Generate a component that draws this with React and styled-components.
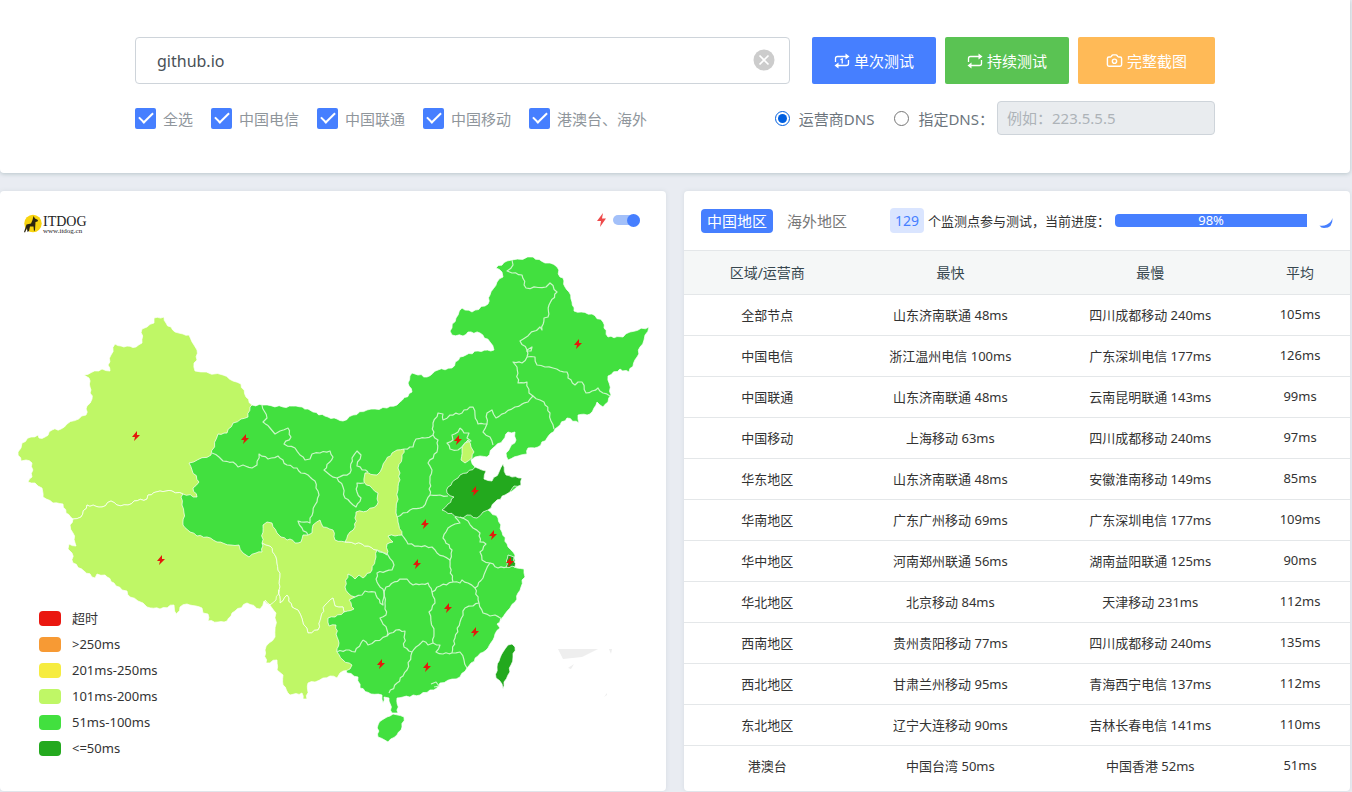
import React, { useState } from 'react';
import styled, { createGlobalStyle } from 'styled-components';
import { Camera } from 'lucide-react';

const GlobalStyle = createGlobalStyle`
    * {
        box-sizing: border-box;
    }

    body {
        margin: 0;
        background: #e9ecf2;
        color: #333;
        font-family: 'Noto Sans', 'Noto Sans CJK SC', sans-serif;
        font-size: 13px;
    }

    button, input {
        font-family: inherit;
    }
`;

const Page = styled.div`
    display: grid;
    gap: 18px;
    padding: 0 2px 1px 0;
`;

const SearchCard = styled.header`
    padding: 37px 24px 38px;
    background: #fff;
    border-radius: 0 0 4px 4px;
    box-shadow: 0 1px 4px #b8c6ca;
`;

const SearchInner = styled.form`
    display: grid;
    gap: 17px;
    max-width: 1080px;
    margin: 0 auto;
`;

const Row = styled.div`
    display: flex;
    align-items: center;
    justify-content: space-between;
    gap: ${({ $gap }) => $gap}px;
`;

const HostField = styled.div`
    display: flex;
    flex: 1;
    align-items: center;
    height: 47px;
    margin-right: 13px;
    padding: 0 14px 2px 21px;
    border: 1px solid #ced4da;
    border-radius: 4px;
`;

const HostInput = styled.input`
    flex: 1;
    min-width: 0;
    padding: 2px 0 0;
    border: 0;
    outline: none;
    color: #495057;
    font-size: 16px;
`;

const ClearButton = styled.button`
    display: flex;
    padding: 0;
    border: 0;
    background: none;
    cursor: pointer;
`;

const ActionButton = styled.button`
    display: flex;
    align-items: center;
    justify-content: center;
    gap: 4px;
    height: 47px;
    padding: 0 ${({ $pad }) => $pad}px;
    border: 0;
    border-radius: 2px;
    background: ${({ $color }) => $color};
    color: #fff;
    font-size: 15px;
    cursor: pointer;
`;

const Options = styled.div`
    display: flex;
    align-items: center;
    gap: ${({ $gap }) => $gap}px;
`;

const CheckLabel = styled.label`
    display: flex;
    align-items: center;
    gap: 7px;
    color: #8f969c;
    font-size: 15px;
`;

const CheckInput = styled.input`
    display: grid;
    place-items: center;
    width: 21px;
    height: 21px;
    margin: 0;
    border-radius: 2px;
    appearance: none;
    background: #dde1e6;

    &:checked {
        background: #467fff;
    }

    &:checked::after {
        content: '';
        width: 12px;
        height: 6px;
        margin-bottom: 4px;
        border: solid #fff;
        border-width: 0 0 2px 2px;
        transform: rotate(-45deg);
    }
`;

const RadioLabel = styled.label`
    display: flex;
    align-items: center;
    gap: 9px;
    color: #6c757d;
    font-size: 15px;
`;

const RadioInput = styled.input`
    width: 15px;
    height: 15px;
    margin: 0;
    accent-color: #005fdf;
`;

const DnsInput = styled.input`
    width: 218px;
    height: 34px;
    margin-left: -17px;
    padding: 0 9px;
    border: 1px solid #ced4da;
    border-radius: 4px;
    background: #e9ecef;
    font-size: 15px;

    &::placeholder {
        color: #adb3b8;
    }
`;

const Columns = styled.main`
    display: grid;
    grid-template-columns: 1fr 1fr;
    gap: 18px;
`;

const Panel = styled.section`
    position: relative;
    min-width: 0;
    padding-bottom: 4px;
    border-radius: 4px;
    background: #fff;
    box-shadow: 0 0 4px #d5dbe1;
`;

const MapHead = styled.div`
    display: flex;
    align-items: flex-start;
    justify-content: space-between;
    height: 60px;
    padding: 22px 26px 0 23px;
`;

const Logo = styled.a`
    display: flex;
    align-items: center;
    color: #222;
    text-decoration: none;
    font-family: 'Liberation Serif', serif;
`;

const LogoText = styled.span`
    display: grid;
    padding-top: 2px;
    font-size: 14px;
    line-height: 12px;
`;

const LogoUrl = styled.small`
    font-size: 7px;
    line-height: 6px;
`;

const SwitchLabel = styled.label`
    display: flex;
    align-items: center;
    gap: 7px;
`;

const SwitchInput = styled.input`
    display: flex;
    align-items: center;
    justify-content: ${({ checked }) => (checked ? 'flex-end' : 'flex-start')};
    width: 27px;
    height: 10px;
    margin: 0;
    border-radius: 5px;
    appearance: none;
    background: #a3c0f9;

    &::after {
        content: '';
        flex: none;
        width: 13px;
        height: 13px;
        border-radius: 50%;
        background: #467fff;
    }
`;

const MapSvg = styled.svg`
    display: block;
    width: 100%;
`;

const Legend = styled.ul`
    position: absolute;
    bottom: 29px;
    left: 39px;
    margin: 0;
    padding: 0;
    list-style: none;
`;

const LegendItem = styled.li`
    display: flex;
    align-items: center;
    gap: 11px;
    height: 26px;
    padding-bottom: 1px;
    line-height: 16px;
`;

const Swatch = styled.span`
    width: 22px;
    height: 15px;
    border-radius: 4px;
    background: ${({ $color }) => $color};
`;

const StatusBar = styled.div`
    display: flex;
    align-items: center;
    height: 59px;
    padding: 0 17px;
    white-space: nowrap;
`;

const RegionTab = styled.button`
    height: 24px;
    margin-right: 8px;
    padding: 0 6px;
    border: 0;
    border-radius: 4px;
    background: ${({ $active }) => ($active ? '#467fff' : 'none')};
    color: ${({ $active }) => ($active ? '#fff' : '#777')};
    font-size: 15px;
    line-height: 24px;
    cursor: pointer;
`;

const Count = styled.span`
    margin: 0 4px 0 29px;
    padding: 0 5px;
    border-radius: 4px;
    background: #dae5ff;
    color: #467fff;
    font-size: 14px;
    line-height: 25px;
`;

const Track = styled.div`
    flex: 1;
    margin: 0 8px 0 5px;
`;

const Bar = styled.div`
    height: 13px;
    border-radius: 4px 0 0 4px;
    background: #467fff;
    color: #fff;
    text-align: center;
    line-height: 13px;
`;

const Table = styled.table`
    width: 100%;
    table-layout: fixed;
    border-collapse: collapse;
    text-align: center;

    th, td {
        padding: 0 0 2px;
        border-top: 1px solid #e4e7e9;
        font-weight: 400;
    }

    td {
        height: 41px;
    }
`;

const HeadCell = styled.th`
    width: ${({ $width }) => $width};
    height: 44px;
    background: #f5f7f7;
    color: #37474f;
    font-size: 14px;
`;

const LIGHT = '#bff766';
const GREEN = '#42e03f';
const DARK = '#23a91e';

const carriers = ['全选', '中国电信', '中国联通', '中国移动', '港澳台、海外'];

const legend = [
    ['超时', '#ea1710'],
    ['>250ms', '#f79a34'],
    ['201ms-250ms', '#f6ec40'],
    ['101ms-200ms', LIGHT],
    ['51ms-100ms', GREEN],
    ['<=50ms', DARK],
];

const rows = [
    ['全部节点', '山东济南联通 48ms', '四川成都移动 240ms', '105ms'],
    ['中国电信', '浙江温州电信 100ms', '广东深圳电信 177ms', '126ms'],
    ['中国联通', '山东济南联通 48ms', '云南昆明联通 143ms', '99ms'],
    ['中国移动', '上海移动 63ms', '四川成都移动 240ms', '97ms'],
    ['华东地区', '山东济南联通 48ms', '安徽淮南移动 149ms', '85ms'],
    ['华南地区', '广东广州移动 69ms', '广东深圳电信 177ms', '109ms'],
    ['华中地区', '河南郑州联通 56ms', '湖南益阳联通 125ms', '90ms'],
    ['华北地区', '北京移动 84ms', '天津移动 231ms', '112ms'],
    ['西南地区', '贵州贵阳移动 77ms', '四川成都移动 240ms', '135ms'],
    ['西北地区', '甘肃兰州移动 95ms', '青海西宁电信 137ms', '112ms'],
    ['东北地区', '辽宁大连移动 90ms', '吉林长春电信 141ms', '110ms'],
    ['港澳台', '中国台湾 50ms', '中国香港 52ms', '51ms'],
];

// east and centre of the mainland, the western provinces are drawn on top
const mainland = '252,405 263,405 283,407 296,406 308,409 313,412 328,417 337,419 343,421 353,415 367,410 387,408 397,405 400,402 412,392 408,383 412,373 427,377 438,370 452,368 460,357 466,355 478,351 494,350 490,342 480,333 468,332 463,336 452,335 450,331 456,318 462,308 472,312 488,304 490,295 497,282 503,277 502,272 496,268 507,261 533,257 545,263 550,263 557,267 560,277 563,278 565,287 569,292 572,302 574,311 592,314 603,322 604,328 608,337 623,337 630,332 649,327 645,335 644,340 640,347 637,357 629,372 620,369 608,376 611,395 608,402 603,407 597,402 594,408 590,414 578,415 579,423 567,418 555,429 547,438 538,447 528,448 527,454 518,456 508,460 506,453 516,440 515,432 508,432 503,440 493,448 487,457 480,456 475,457 471,460 475,467 486,471 484,479 492,481 499,472 503,464 506,475 521,478 521,485 505,495 495,502 488,510 498,518 502,532 508,547 515,555 514,567 524,569 525,577 522,580 521,587 518,593 515,602 510,608 503,617 497,624 500,628 495,634 493,640 488,648 478,656 467,668 460,677 440,683 437,688 430,690 420,695 403,697 397,698 398,713 392,713 389,698 384,697 383,703 382,695 371,694 360,688 358,677 347,673 330,640 290,580 220,580 170,520 185,480 190,440 240,400';

const provinces = [
    // Xinjiang
    [LIGHT, '164,317 154,318 154,323 147,327 142,329 142,343 136,347 121,346 115,344 111,355 108,365 110,371 102,369 84,375 89,378 90,387 92,399 87,406 86,415 67,424 61,429 52,430 45,437 39,438 38,435 31,437 22,443 21,448 18,452 21,461 26,460 32,463 32,477 28,482 35,483 42,488 43,497 53,503 63,504 66,513 73,519 81,517 87,505 102,507 111,501 117,505 128,505 134,501 147,499 148,495 160,491 172,491 183,494 197,497 193,488 199,482 192,470 189,463 211,455 218,434 227,433 233,423 241,419 248,417 250,407 252,405 246,397 241,384 233,381 223,375 195,371 194,363 197,360 197,350 194,345 189,335 183,334 175,332 166,323'],
    // Tibet
    [LIGHT, '73,519 70,525 73,533 76,546 69,544 68,549 72,553 73,563 84,571 95,578 97,574 105,575 114,583 122,590 127,591 130,597 138,601 143,603 147,607 160,609 174,605 176,617 180,607 187,604 196,606 202,608 203,613 208,614 208,621 218,622 227,621 232,613 247,603 260,609 264,601 270,605 279,603 279,590 280,577 277,563 276,557 270,546 262,543 262,552 256,553 249,557 243,553 239,545 231,545 217,542 207,537 197,536 190,532 183,525 184,513 182,505 181,497 183,494 172,491 160,491 148,495 147,499 134,501 128,505 117,505 111,501 102,507 87,505 81,517'],
    // Sichuan
    [LIGHT, '262,543 263,525 267,522 272,523 277,533 281,537 287,540 290,539 295,543 301,542 303,535 308,535 312,533 313,525 320,520 323,527 333,530 335,540 345,542 362,544 377,550 376,557 372,570 363,578 359,575 355,579 348,574 345,587 348,593 355,597 349,600 354,609 344,612 343,607 335,606 333,598 325,605 321,617 318,630 308,633 298,610 292,607 287,595 280,603 279,590 280,577 277,563 276,557 270,546'],
    // Yunnan
    [LIGHT, '280,603 287,595 292,607 298,610 308,633 318,630 321,617 325,605 333,598 335,606 343,607 344,612 335,617 328,618 329,626 336,625 337,637 339,643 337,652 343,660 352,665 350,669 340,673 337,678 330,676 323,678 315,682 308,683 307,699 303,699 302,693 290,695 283,685 283,675 277,670 277,660 266,663 265,650 269,643 275,637 276,613 272,608 265,600 270,605 276,600 279,590'],
    // Shaanxi
    [LIGHT, '345,542 350,532 355,527 356,512 367,511 377,505 378,493 364,482 365,473 377,475 382,468 386,460 392,453 397,450 404,449 402,458 398,468 400,473 398,490 396,513 398,522 402,535 388,536 393,542 387,544 387,555 377,550 362,544'],
    // Tianjin
    [LIGHT, '468,440 471,447 474,452 472,458 465,463 461,460 462,450 464,444'],
    // Shandong
    [DARK, '475,467 486,471 484,479 492,481 499,472 503,464 506,475 512,477 522,478 521,485 514,486 510,492 505,495 495,502 488,510 483,512 477,518 467,515 463,518 458,517 442,510 448,504 454,497 447,493 448,487 460,475 467,473'],
    // Shanghai
    [DARK, '508,555 514,557 515,567 506,567'],
    // Hainan
    [GREEN, '393,714 404,717 402,727 397,735 388,742 378,737 378,725 382,720 387,717'],
    // Taiwan
    [DARK, '512,644 515,647 513,657 511,665 508,675 504,682 503,689 502,684 496,678 497,667 500,658 503,652 508,645'],
];

const borders = [
    '212,453 219,457 223,461 233,462 238,467 243,465 252,468 257,465 259,454 268,459 278,456 287,465 297,468 301,473 308,475 315,481 316,488 319,495 315,505 313,512 310,518 310,523 298,521 302,528 308,535',
    '262,405 267,418 263,422 270,428 275,434 280,431 288,428 291,437 284,444 295,448 300,455 305,460 310,459 312,454 320,453 330,451 333,457 324,470 330,475 337,478 350,473 352,458 357,451 361,455 357,466 368,472',
    '337,478 343,487 345,498 350,502 356,507 361,498 357,492 357,483 364,483',
    '404,449 413,447 416,439 425,438 433,435 433,423 438,413 443,414 443,420 450,415 462,413 464,410 473,407 475,415 478,424 487,424 487,413 492,410 496,418 505,413 515,407 528,402 533,396 529,393 527,382 518,383 517,367 513,362 522,363 527,357 527,350 520,341 540,327 542,330 544,318 548,317 549,305 557,292 550,283 546,287 526,288 522,275 512,273 507,271 513,265 512,260',
    '527,350 532,347 531,351 526,351',
    '527,357 535,357 537,365 545,367 553,368 560,371 567,372 568,378 575,385 578,382 582,382 586,393 592,391 598,388 603,393 610,396',
    '533,396 540,400 544,402 550,413 551,421 554,429',
    '487,424 483,432 490,437 493,445',
    '433,435 438,440 437,452 428,463 432,470 430,480 430,495 423,507 410,510 397,517',
    '430,495 440,495 448,496',
    '460,428 464,433 469,433 467,438 471,441 465,443 462,447 458,450 450,449 447,443 453,440 452,435 458,432 460,428',
    '402,535 408,544 418,546 432,547 437,553 450,560 452,550 443,538 448,528 455,524 460,523 455,517',
    '460,517 468,521 473,528 480,533 480,542 486,544 480,552 482,560 490,563 486,570 483,578 475,588 479,603 473,606 465,608 460,622 455,638 452,653',
    '450,560 450,567 453,582 460,583 462,580 468,583 475,588',
    '490,563 498,568 507,567',
    '384,592 386,587 400,579 407,579 413,585 422,584 428,583 432,592 440,586 453,582',
    '432,592 435,603 429,612 434,633 433,643',
    '479,603 483,613 490,616 495,615 502,619',
    '363,640 368,645 387,636 396,630 405,631 404,647 412,652 416,647 423,641 428,645 433,643 440,645 436,652 443,654 452,653 460,652 464,660 467,668',
    '412,652 407,670 403,676 397,683 389,693',
    '384,592 385,603 386,615 380,618 387,630 387,636',
    '337,652 346,650 355,652 363,640',
    '377,550 388,555 394,565 392,570 377,573 377,582 384,592',
    '355,597 362,595 365,591 375,592 380,603 383,605 384,592',
    '431,684 436,682 439,686 434,687',
];

const nodes = [
    [578, 344], [136, 436], [245, 439], [458, 440], [475, 491], [425, 524], [493, 535],
    [510, 562], [417, 564], [161, 560], [448, 608], [475, 632], [381, 664], [427, 667],
];

// Adds small bends to a line. A segment bends the same way in both
// directions, so neighbouring provinces keep a common edge.
const roughen = (text, closed) => {
    const points = text.split(' ').map((pair) => pair.split(',').map(Number));
    const result = [];

    points.forEach((a, i) => {
        result.push(a.join(','));
        if (!closed && i === points.length - 1) return;

        const b = points[(i + 1) % points.length];
        const length = Math.hypot(b[0] - a[0], b[1] - a[1]);
        const steps = Math.min(5, Math.floor(length / 3));
        const flipped = a[0] > b[0] || (a[0] === b[0] && a[1] > b[1]);
        const [from, to] = flipped ? [b, a] : [a, b];
        const bends = [];

        for (let step = 1; step < steps; step += 1) {
            const t = step / steps;
            const shift = Math.sin(from[0] * 12.9 + from[1] * 78.2 + to[0] * 3.7 + step * 2.4) * 0.9;
            const x = from[0] + (to[0] - from[0]) * t - ((to[1] - from[1]) / length) * shift;
            const y = from[1] + (to[1] - from[1]) * t + ((to[0] - from[0]) / length) * shift;
            bends.push(`${x.toFixed(1)},${y.toFixed(1)}`);
        }
        result.push(...(flipped ? bends.reverse() : bends));
    });
    return result.join(' ');
};

const RepeatIcon = ({ once }) => (
    <svg width="16" height="16" viewBox="0 0 16 16" fill="none" stroke="#fff" strokeWidth="1.3" aria-hidden="true">
        <path d="M1.500 9V5.500Q1.500 3.500 3.500 3.500H13M14.500 7V10.500Q14.500 12.500 12.500 12.500H3" />
        <path d="M11.500 .5 15.500 3.500 11.500 6.500ZM4.500 9.500 .5 12.500 4.500 15.500Z" fill="#fff" stroke="none" />
        {once && <path d="M6.500 6.700 8.200 6V10.500" />}
    </svg>
);

const ChinaMap = () => (
    <MapSvg viewBox="0 251 666 500" role="img" aria-label="中国地区">
        <g stroke="#fff" strokeOpacity=".7" strokeLinejoin="round">
            <polygon points={roughen(mainland, true)} fill={GREEN} />
            {provinces.map(([color, points]) => (
                <polygon key={points} points={roughen(points, true)} fill={color} />
            ))}
        </g>
        <g fill="none" stroke="#c9f7c7" strokeWidth="1.2" strokeLinejoin="round">
            {borders.map((points) => (
                <polyline key={points} points={roughen(points, false)} />
            ))}
        </g>
        <g fill="#eee">
            <path d="M558 649H598L582 657 563 659ZM568 668 574 664 571 669ZM609 649H612L611 654ZM604 697 607 693V695Z" />
        </g>
        <g fill="#e21a0c">
            {nodes.map(([x, y]) => (
                <path key={`${x}-${y}`} d={`M${x + 1} ${y - 5}l-5 6h3l-1 4 6-6h-3z`} />
            ))}
        </g>
    </MapSvg>
);

const App = () => {
    const [host, setHost] = useState('github.io');
    const [dns, setDns] = useState('isp');
    const [region, setRegion] = useState('中国地区');
    const [showNodes, setShowNodes] = useState(true);
    const progress = 98;

    return (
        <Page>
            <GlobalStyle />
            <SearchCard>
                <SearchInner onSubmit={(e) => e.preventDefault()}>
                    <Row $gap={9}>
                        <HostField>
                            <HostInput aria-label="域名" value={host} onChange={(e) => setHost(e.target.value)} />
                            <ClearButton type="button" aria-label="清空" onClick={() => setHost('')}>
                                <svg width="22" height="22" viewBox="0 0 22 22">
                                    <circle cx="11" cy="11" r="10.5" fill="#ccc" />
                                    <path d="M6.500 6.500l9 9M15.500 6.500l-9 9" stroke="#fff" strokeWidth="1.7" />
                                </svg>
                            </ClearButton>
                        </HostField>
                        <ActionButton type="submit" $color="#467fff" $pad={22}>
                            <RepeatIcon once />
                            单次测试
                        </ActionButton>
                        <ActionButton type="button" $color="#5ac353" $pad={22}>
                            <RepeatIcon />
                            持续测试
                        </ActionButton>
                        <ActionButton type="button" $color="#ffba57" $pad={28}>
                            <Camera size={17} strokeWidth={2} />
                            完整截图
                        </ActionButton>
                    </Row>
                    <Row $gap={18}>
                        <Options $gap={18}>
                            {carriers.map((name) => (
                                <CheckLabel key={name}>
                                    <CheckInput type="checkbox" defaultChecked />
                                    {name}
                                </CheckLabel>
                            ))}
                        </Options>
                        <Options $gap={20}>
                            <RadioLabel>
                                <RadioInput type="radio" name="dns" checked={dns === 'isp'} onChange={() => setDns('isp')} />
                                运营商DNS
                            </RadioLabel>
                            <RadioLabel>
                                <RadioInput type="radio" name="dns" checked={dns === 'custom'} onChange={() => setDns('custom')} />
                                指定DNS：
                            </RadioLabel>
                            <DnsInput aria-label="指定DNS" placeholder="例如：223.5.5.5" disabled={dns === 'isp'} />
                        </Options>
                    </Row>
                </SearchInner>
            </SearchCard>
            <Columns>
                <Panel>
                    <MapHead>
                        <Logo href="#">
                            <svg width="20" height="22" viewBox="0 0 20 22" aria-hidden="true">
                                <circle cx="10" cy="10.500" r="8.700" fill="#f8d40f" />
                                <path d="M10.500 3 12 5.500 15 7 14.500 8.500 12.500 9 12 17 11 18.500 10.500 13.500 7 13.500 6 18 4.500 19 4 15 2 19.500 1 19 3.500 11.500 8 10.500 9.500 7Z" fill="#2b2410" />
                            </svg>
                            <LogoText>
                                ITDOG
                                <LogoUrl>www.itdog.cn</LogoUrl>
                            </LogoText>
                        </Logo>
                        <SwitchLabel>
                            <svg width="9" height="14" viewBox="0 0 9 14" aria-hidden="true">
                                <path d="M6 0 0 8H4L3 14 9 5.500H5Z" fill="#ee4a4a" />
                            </svg>
                            <SwitchInput
                                type="checkbox"
                                role="switch"
                                aria-label="最快节点"
                                checked={showNodes}
                                onChange={(e) => setShowNodes(e.target.checked)}
                            />
                        </SwitchLabel>
                    </MapHead>
                    <ChinaMap />
                    <Legend>
                        {legend.map(([label, color]) => (
                            <LegendItem key={label}>
                                <Swatch $color={color} />
                                {label}
                            </LegendItem>
                        ))}
                    </Legend>
                </Panel>
                <Panel>
                    <StatusBar>
                        {['中国地区', '海外地区'].map((name) => (
                            <RegionTab key={name} type="button" $active={region === name} onClick={() => setRegion(name)}>
                                {name}
                            </RegionTab>
                        ))}
                        <Count>129</Count>
                        个监测点参与测试，当前进度：
                        <Track role="progressbar" aria-valuenow={progress} aria-label="当前进度">
                            <Bar style={{ width: `${progress}%` }}>{progress}%</Bar>
                        </Track>
                        <svg width="14" height="16" viewBox="0 0 14 16" aria-hidden="true">
                            <path d="M13.500 5Q14 15 5 15 2 15 .5 12.500 4 13.500 8 11.500 12 9.500 13.500 5Z" fill="#467fff" />
                        </svg>
                    </StatusBar>
                    <Table>
                        <thead>
                            <tr>
                                <HeadCell $width="25%">区域/运营商</HeadCell>
                                <HeadCell $width="30%">最快</HeadCell>
                                <HeadCell $width="30%">最慢</HeadCell>
                                <HeadCell $width="15%">平均</HeadCell>
                            </tr>
                        </thead>
                        <tbody>
                            {rows.map((row) => (
                                <tr key={row[0]}>
                                    {row.map((cell, i) => (
                                        <td key={i}>{cell}</td>
                                    ))}
                                </tr>
                            ))}
                        </tbody>
                    </Table>
                </Panel>
            </Columns>
        </Page>
    );
};

export default App;
